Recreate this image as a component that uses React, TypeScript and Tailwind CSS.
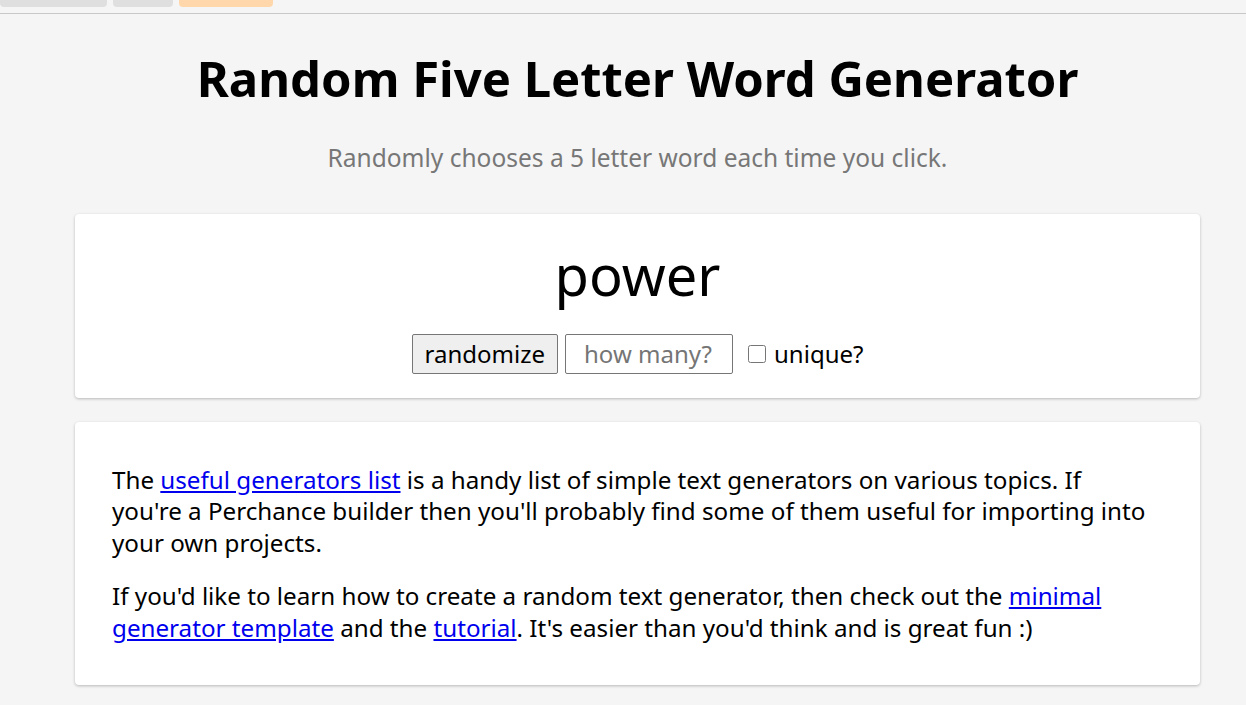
export default function App() {
  return (
    <div className="min-h-[705px] bg-[#f5f5f5] text-black" style={{ fontFamily: '"Noto Sans", "Open Sans", sans-serif' }}>
      {/* top tab strip */}
      <div className="flex gap-[6px] h-[14px] border-b border-[#c8c8c8]">
        <div className="w-[107px] h-[7px] bg-[#dfdfdf] rounded-b-[4px]" />
        <div className="w-[60px] h-[7px] bg-[#dfdfdf] rounded-b-[4px]" />
        <div className="w-[94px] h-[7px] bg-[#ffd7aa] rounded-b-[4px]" />
      </div>

      <main className="ml-[75px] mr-[46px] pb-[20px]">
        <h1 className="text-center font-bold text-[49px] leading-none pt-[40px]">
          Random Five Letter Word Generator
        </h1>
        <p className="text-center text-[#777777] text-[24.5px] leading-none mt-[43px]">
          Randomly chooses a 5 letter word each time you click.
        </p>

        <section className="mt-[43px] bg-white rounded-[4px] shadow-[0_1px_3px_rgba(0,0,0,0.25)] h-[184px] flex flex-col items-center pt-[24px]">
          <div className="text-[56px] leading-[72px]">power</div>
          <div className="flex items-center mt-[24px] text-[24px]">
            <button className="h-[40px] px-[12px] bg-[#efefef] border border-[#767676] rounded-[2px] leading-none">
              randomize
            </button>
            <input
              placeholder="how many?"
              className="ml-[7px] h-[40px] w-[168px] px-[18px] border border-[#767676] rounded-[2px] bg-white placeholder:text-[#757575] outline-none"
            />
            <input type="checkbox" className="ml-[15px] w-[18px] h-[18px]" />
            <span className="ml-[8px]">unique?</span>
          </div>
        </section>

        <section className="mt-[24px] bg-white rounded-[4px] shadow-[0_1px_3px_rgba(0,0,0,0.25)] h-[263px] pl-[37px] pr-[34px] pt-[42px] text-[24.2px] leading-[31.5px]">
          <p>
            The <a href="#" className="text-[#0000ee] underline">useful generators list</a> is a handy list of simple text generators on various topics. If
            <br />
            you're a Perchance builder then you'll probably find some of them useful for importing into your own projects.
          </p>
          <p className="mt-[22px]">
            If you'd like to learn how to create a random text generator, then check out the{" "}
            <a href="#" className="text-[#0000ee] underline">minimal generator template</a> and the{" "}
            <a href="#" className="text-[#0000ee] underline">tutorial</a>. It's easier than you'd think and is great fun :)
          </p>
        </section>
      </main>
    </div>
  );
}
